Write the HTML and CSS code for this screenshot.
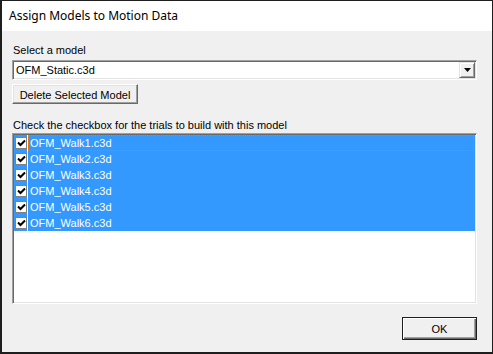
FILE: index.html
```html
<!DOCTYPE html>
<html>
<head>
<meta charset="utf-8">
<link rel="stylesheet" href="styles.css">
</head>
<body>
<div class="window">
  <div class="titlebar">Assign Models to Motion Data</div>
  <div class="content">
    <div class="label first">Select a model</div>
    <div class="combo">
      <span class="combo-text">OFM_Static.c3d</span>
      <span class="drop"><svg width="7" height="4" viewBox="0 0 7 4"><path d="M0 0H7L3.5 4Z" fill="#000"/></svg></span>
    </div>
    <div class="btn delete">Delete Selected Model</div>
    <div class="label second">Check the checkbox for the trials to build with this model</div>
    <div class="list">
      <div class="row focus"><span class="check"><svg width="9" height="9" viewBox="0 0 9 9"><path d="M1 3.5L3.5 6L8 1.5" stroke="#000" stroke-width="2" fill="none"/></svg></span><span class="sep"></span><span class="item">OFM_Walk1.c3d</span></div>
      <div class="row"><span class="check"><svg width="9" height="9" viewBox="0 0 9 9"><path d="M1 3.5L3.5 6L8 1.5" stroke="#000" stroke-width="2" fill="none"/></svg></span><span class="sep"></span><span class="item">OFM_Walk2.c3d</span></div>
      <div class="row"><span class="check"><svg width="9" height="9" viewBox="0 0 9 9"><path d="M1 3.5L3.5 6L8 1.5" stroke="#000" stroke-width="2" fill="none"/></svg></span><span class="sep"></span><span class="item">OFM_Walk3.c3d</span></div>
      <div class="row"><span class="check"><svg width="9" height="9" viewBox="0 0 9 9"><path d="M1 3.5L3.5 6L8 1.5" stroke="#000" stroke-width="2" fill="none"/></svg></span><span class="sep"></span><span class="item">OFM_Walk4.c3d</span></div>
      <div class="row"><span class="check"><svg width="9" height="9" viewBox="0 0 9 9"><path d="M1 3.5L3.5 6L8 1.5" stroke="#000" stroke-width="2" fill="none"/></svg></span><span class="sep"></span><span class="item">OFM_Walk5.c3d</span></div>
      <div class="row"><span class="check"><svg width="9" height="9" viewBox="0 0 9 9"><path d="M1 3.5L3.5 6L8 1.5" stroke="#000" stroke-width="2" fill="none"/></svg></span><span class="sep"></span><span class="item">OFM_Walk6.c3d</span></div>
    </div>
    <div class="footer">
      <div class="btn ok">OK</div>
    </div>
  </div>
</div>
</body>
</html>
```

FILE: styles.css
```css
html, body {
  margin: 0;
  padding: 0;
  background: #f0f0f0;
}
.window {
  width: 493px;
  height: 354px;
  box-sizing: border-box;
  border: 1px solid #1e1e1e;
  border-left-width: 2px;
  border-bottom-width: 2px;
  display: flex;
  flex-direction: column;
  font-family: "Liberation Sans", Arial, sans-serif;
  font-size: 11px;
  color: #000;
}
.titlebar {
  height: 30px;
  background: #fff;
  font-family: "Noto Sans", "Open Sans", sans-serif;
  font-size: 12px;
  line-height: 30px;
  padding-left: 7px;
  color: #000;
  flex: none;
}
.content {
  flex: 1;
  background: #f0f0f0;
  padding: 0 15px 0 10px;
  display: flex;
  flex-direction: column;
}
.label {
  line-height: 13px;
  height: 13px;
  padding-left: 1px;
}
.label.first {
  margin-top: 13px;
}
.combo {
  height: 20px;
  box-sizing: border-box;
  border-style: solid;
  border-width: 1px;
  border-color: #a0a0a0 #ffffff #ffffff #a0a0a0;
  box-shadow: inset 1px 1px #696969, inset -1px -1px #e3e3e3;
  background: #fff;
  display: flex;
  align-items: center;
  justify-content: space-between;
  padding: 1px 1px 1px 3px;
  margin-top: 3px;
}
.combo-text {
  line-height: 14px;
}
.drop {
  width: 16px;
  height: 16px;
  box-sizing: border-box;
  background: #f0f0f0;
  border-style: solid;
  border-width: 1px;
  border-color: #e3e3e3 #696969 #696969 #e3e3e3;
  box-shadow: inset 1px 1px #fff, inset -1px -1px #a0a0a0;
  display: flex;
  align-items: center;
  justify-content: center;
}
.btn {
  box-sizing: border-box;
  background: #f0f0f0;
  border-style: solid;
  border-width: 1px;
  border-color: #fff #696969 #696969 #fff;
  box-shadow: inset -1px -1px #a0a0a0, inset 1px 1px #e3e3e3;
  display: flex;
  align-items: center;
  justify-content: center;
}
.delete {
  width: 126px;
  height: 20px;
  margin-top: 4px;
  padding-top: 1px;
}
.label.second {
  margin-top: 15px;
}
.list {
  margin-top: 1px;
  height: 171px;
  box-sizing: border-box;
  border-style: solid;
  border-width: 1px;
  border-color: #a0a0a0 #ffffff #ffffff #a0a0a0;
  box-shadow: inset 1px 1px #696969, inset -1px -1px #e3e3e3;
  background: #fff;
  padding: 1px;
}
.row {
  height: 16px;
  display: flex;
  align-items: center;
  background: #3399ff;
}
.check {
  width: 12px;
  height: 12px;
  box-sizing: border-box;
  border: 1px solid #808080;
  background: #fff;
  margin-left: 1px;
  display: flex;
  align-items: center;
  justify-content: center;
}
.sep {
  width: 1px;
  height: 16px;
  background: #fff;
}
.item {
  flex: 1;
  height: 16px;
  box-sizing: border-box;
  color: #fff;
  line-height: 14px;
  padding-left: 1px;
  border: 1px dotted transparent;
}
.focus .item {
  border: 1px dotted #e87a1c;
  margin-right: 1px;
}
.footer {
  flex: 1;
  display: flex;
  justify-content: flex-end;
  align-items: flex-start;
  padding-top: 13px;
}
.ok {
  width: 75px;
  height: 23px;
  border: 1px solid #1e1e1e;
  box-shadow: inset 1px 1px #fff, inset -1px -1px #696969, inset -2px -2px #a0a0a0;
}
```
